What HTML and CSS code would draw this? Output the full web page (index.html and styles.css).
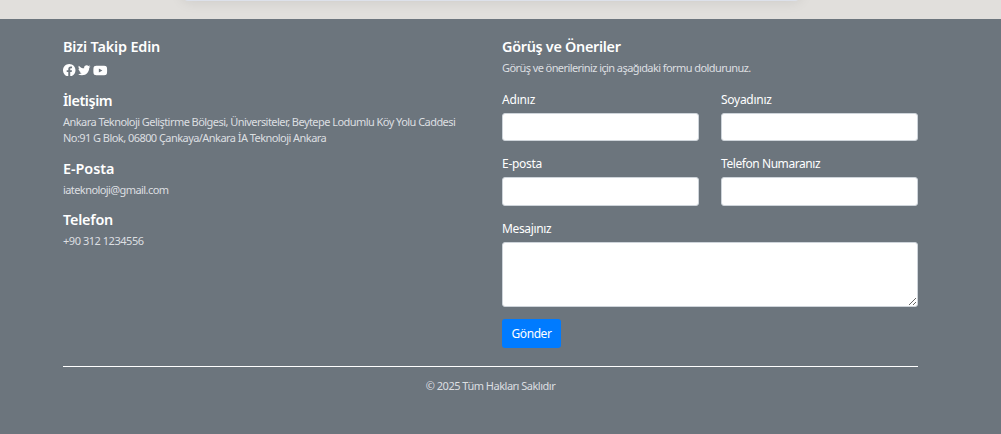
FILE: index.html
```html
<!DOCTYPE html>
<html lang="tr">
<head>
<meta charset="utf-8">
<title>İA Teknoloji</title>
<link rel="stylesheet" href="styles.css">
</head>
<body>
<main class="page-end"><div class="card"></div></main>
<footer class="footer">
  <div class="columns">
    <section class="contact">
      <h5 class="title t-follow">Bizi Takip Edin</h5>
      <div class="social">
        <svg viewBox="0 0 16 16" width="12.5" height="12.5"><path d="M16 8.049c0-4.446-3.582-8.05-8-8.05C3.58 0-.002 3.603-.002 8.05c0 4.017 2.926 7.347 6.75 7.951v-5.625h-2.03V8.05H6.75V6.275c0-2.017 1.195-3.131 3.022-3.131.876 0 1.791.157 1.791.157v1.98h-1.009c-.993 0-1.303.621-1.303 1.258v1.51h2.218l-.354 2.326H9.25V16c3.824-.604 6.75-3.934 6.75-7.951z"/></svg>
        <svg viewBox="0 0 512 512" width="12.5" height="12.5"><path d="M459.37 151.716c.325 4.548.325 9.097.325 13.645 0 138.72-105.583 298.558-298.558 298.558-59.452 0-114.68-17.219-161.137-47.106 8.447.974 16.568 1.299 25.34 1.299 49.055 0 94.213-16.568 130.274-44.832-46.132-.975-84.792-31.188-98.112-72.772 6.498.974 12.995 1.624 19.818 1.624 9.421 0 18.843-1.3 27.614-3.573-48.081-9.747-84.143-51.98-84.143-102.985v-1.299c13.969 7.797 30.214 12.67 47.431 13.319-28.264-18.843-46.781-51.005-46.781-87.391 0-19.492 5.197-37.36 14.294-52.954 51.655 63.675 129.3 105.258 216.365 109.807-1.624-7.797-2.599-15.918-2.599-24.04 0-57.828 46.782-104.934 104.934-104.934 30.213 0 57.502 12.67 76.67 33.137 23.715-4.548 46.456-13.32 66.599-25.34-7.798 24.366-24.366 44.833-46.132 57.827 21.117-2.273 41.584-8.122 60.426-16.243-14.292 20.791-32.161 39.308-52.628 54.253z"/></svg>
        <svg viewBox="0 0 576 512" width="14.5" height="13"><path d="M549.655 124.083c-6.281-23.65-24.787-42.276-48.284-48.597C458.781 64 288 64 288 64S117.22 64 74.629 75.486c-23.497 6.322-42.003 24.947-48.284 48.597-11.412 42.867-11.412 132.305-11.412 132.305s0 89.438 11.412 132.305c6.281 23.65 24.787 41.5 48.284 47.821C117.22 448 288 448 288 448s170.78 0 213.371-11.486c23.497-6.321 42.003-24.171 48.284-47.821 11.412-42.867 11.412-132.305 11.412-132.305s0-89.438-11.412-132.305zM232.145 337.591V175.185l142.739 81.205-142.739 81.201z"/></svg>
      </div>
      <h5 class="title t-contact">İletişim</h5>
      <p class="info"><span class="i-line1">Ankara Teknoloji Geliştirme Bölgesi, Üniversiteler, Beytepe Lodumlu Köy Yolu Caddesi</span><br><span class="i-line2">No:91 G Blok, 06800 Çankaya/Ankara İA Teknoloji Ankara</span></p>
      <h5 class="title t-mail">E-Posta</h5>
      <p class="info i-mail">iateknoloji@gmail.com</p>
      <h5 class="title t-phone">Telefon</h5>
      <p class="info i-phone">+90 312 1234556</p>
    </section>
    <section class="feedback">
      <h5 class="title t-feedback">Görüş ve Öneriler</h5>
      <p class="info i-feedback">Görüş ve önerileriniz için aşağıdaki formu doldurunuz.</p>
      <form class="form">
        <div class="field"><label class="l-name" for="ad">Adınız</label><input id="ad" type="text"></div>
        <div class="field"><label class="l-surname" for="soyad">Soyadınız</label><input id="soyad" type="text"></div>
        <div class="field second"><label class="l-mail" for="eposta">E-posta</label><input id="eposta" type="email"></div>
        <div class="field second"><label class="l-phone" for="tel">Telefon Numaranız</label><input id="tel" type="tel"></div>
        <div class="field wide"><label class="l-message" for="mesaj">Mesajınız</label><textarea id="mesaj"></textarea></div>
        <button class="send" type="button">Gönder</button>
      </form>
    </section>
  </div>
  <p class="copyright">© 2025 Tüm Hakları Saklıdır</p>
</footer>
</body>
</html>
```
FILE: styles.css
```css
* { box-sizing: border-box; }
body {
  margin: 0;
  height: 434px;
  overflow: hidden;
  background: #6c757d;
  color: #fff;
  font-family: "Segoe UI", "Noto Sans", sans-serif;
  font-size: 12px;
}
h5, p { margin: 0; }
.page-end { height: 19px; background: #e1dfdc; overflow: hidden; }
.card {
  width: 617px;
  height: 60px;
  margin: -59px 0 0 183px;
  border-radius: 5px;
  background: #dde1ea;
  box-shadow: 0 0 14px rgba(0, 0, 0, .1);
}
.footer { width: 855px; margin-left: 63px; padding-top: 18px; }
.columns { display: grid; grid-template-columns: 416px 416px; column-gap: 23px; height: 329px; }
.title { font-size: 14.4px; font-weight: 600; line-height: 20px; height: 20px; white-space: nowrap; }
.t-follow { letter-spacing: -.15px; }
.t-contact { letter-spacing: -.45px; }
.t-mail { letter-spacing: -.05px; }
.t-phone { letter-spacing: -.2px; }
.t-feedback { letter-spacing: -.29px; }
.info { font-size: 11px; line-height: 16px; color: #dcdfe1; white-space: nowrap; letter-spacing: -.55px; }
.i-phone { letter-spacing: -.46px; }
.i-mail { letter-spacing: -.58px; }
.i-feedback { letter-spacing: -.58px; }
.contact .info { margin-top: 3px; }
.contact .i-mail, .contact .i-phone { margin-top: 3px; }
.contact .info + .title { margin-top: 12px; }
.contact .info + .t-mail { margin-top: 13px; }
.social { display: flex; align-items: center; gap: 2.5px; height: 14px; margin: 6px 0 14px; }
.social svg { display: block; fill: #fff; }
.feedback .info { margin-top: 3px; }
.form { display: grid; grid-template-columns: 197px 197px; column-gap: 22px; margin-top: 14px; }
.field { height: 64px; }
.field label {
  display: block;
  height: 19px;
  line-height: 19px;
  margin-bottom: 4px;
  white-space: nowrap;
  letter-spacing: -.28px;
}
.field .l-name { letter-spacing: -.2px; }
.field .l-phone { letter-spacing: -.43px; }
.field .l-message { letter-spacing: -.35px; }
.field input, .field textarea {
  display: block;
  width: 100%;
  height: 28px;
  border: 1px solid #ced4da;
  border-radius: 3px;
  background: #fff;
}
.second { height: 65px; }
.second input { height: 29px; }
.wide { grid-column: 1 / 3; height: 88px; }
.wide textarea { height: 65px; resize: vertical; }
.send {
  width: 59px;
  height: 29px;
  margin-top: 12px;
  padding: 0;
  border: 0;
  border-radius: 3px;
  background: #007bff;
  color: #fff;
  font: inherit;
  letter-spacing: -.45px;
}
.copyright {
  border-top: 1px solid #fff;
  padding-top: 11px;
  line-height: 16px;
  font-size: 11px;
  letter-spacing: -.5px;
  text-align: center;
  color: #dcdfe1;
}
```
